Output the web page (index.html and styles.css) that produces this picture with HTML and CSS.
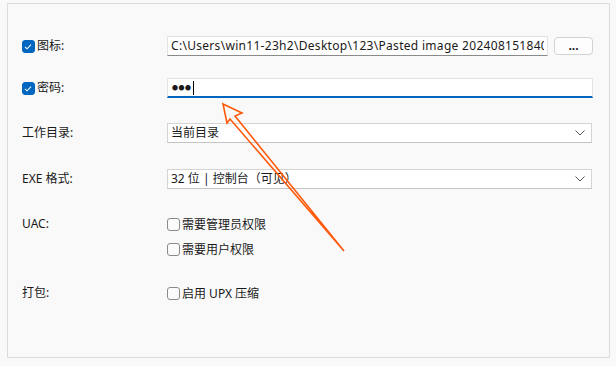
FILE: index.html
```html
<!DOCTYPE html>
<html lang="zh-CN">
<head>
    <meta charset="UTF-8">
    <meta name="viewport" content="width=device-width, initial-scale=1.0">
    <title>打包设置</title>
    <link rel="stylesheet" href="styles.css">
</head>
<body>
    <div class="panel">
        <div class="row row-icon">
            <label class="label">
                <span class="check checked">
                    <svg viewBox="0 0 13 13" width="13" height="13"><path d="M3.2 6.8 L5.4 9 L9.8 4.4" fill="none" stroke="#fff" stroke-width="1.1"/></svg>
                </span>图标:
            </label>
            <div class="control path-line">
                <div class="textbox path-box"><span class="path-text">C:\Users\win11-23h2\Desktop\123\Pasted image 2024081518405</span></div>
                <button class="btn-browse">...</button>
            </div>
        </div>

        <div class="row row-pass">
            <label class="label">
                <span class="check checked">
                    <svg viewBox="0 0 13 13" width="13" height="13"><path d="M3.2 6.8 L5.4 9 L9.8 4.4" fill="none" stroke="#fff" stroke-width="1.1"/></svg>
                </span>密码:
            </label>
            <div class="control">
                <div class="textbox pass-box focused"><span class="dots">●●●</span><span class="caret"></span></div>
            </div>
        </div>

        <div class="row row-dir">
            <span class="label">工作目录:</span>
            <div class="control">
                <div class="combo">当前目录
                    <svg class="chev" viewBox="0 0 10 6" width="10" height="6"><path d="M0.5 0.5 L5 5 L9.5 0.5" fill="none" stroke="#555" stroke-width="1"/></svg>
                </div>
            </div>
        </div>

        <div class="row row-exe">
            <span class="label">EXE 格式:</span>
            <div class="control">
                <div class="combo">32 位 | 控制台（可见）
                    <svg class="chev" viewBox="0 0 10 6" width="10" height="6"><path d="M0.5 0.5 L5 5 L9.5 0.5" fill="none" stroke="#555" stroke-width="1"/></svg>
                </div>
            </div>
        </div>

        <div class="row row-uac">
            <span class="label">UAC:</span>
            <div class="control options">
                <label class="option"><span class="check"></span>需要管理员权限</label>
                <label class="option"><span class="check"></span>需要用户权限</label>
            </div>
        </div>

        <div class="row row-pack">
            <span class="label">打包:</span>
            <div class="control options">
                <label class="option"><span class="check"></span>启用 UPX 压缩</label>
            </div>
        </div>

        <!-- 标注箭头 -->
        <svg class="arrow" viewBox="0 0 616 366" width="616" height="366">
            <polygon points="223,104 242,113 235,116 344,251 230,119 227,123" fill="none" stroke="#ff5a0a" stroke-width="1.6" stroke-linejoin="miter"/>
        </svg>
    </div>
</body>
</html>
```

FILE: styles.css
```css
* {
    margin: 0;
    padding: 0;
    box-sizing: border-box;
}

body {
    background-color: #f9f9f9;
    color: #1a1a1a;
    font-family: "Noto Sans", "Noto Sans CJK SC", sans-serif;
    font-size: 12px;
    width: 616px;
    height: 366px;
    overflow: hidden;
}

.panel {
    margin: 3px 0 0 7px;
    width: 603px;
    height: 355px;
    border: 1px solid #dcdcdc;
    background-color: #f9f9f9;
    padding: 32px 16px 0 14px;
}

.row {
    display: flex;
    align-items: center;
}

.row-icon { height: 20px; margin-bottom: 22px; }
.row-pass { height: 20px; margin-bottom: 25px; }
.row-dir { height: 20px; margin-bottom: 26px; }
.row-exe { height: 20px; margin-bottom: 25px; }
.row-uac { align-items: flex-start; margin-bottom: 24px; }

.label {
    width: 145px;
    flex-shrink: 0;
    display: flex;
    align-items: center;
    line-height: 20px;
    white-space: nowrap;
}

.control {
    flex: 1;
    min-width: 0;
}

.check {
    width: 13px;
    height: 13px;
    border: 1px solid #8b8b8b;
    border-radius: 3px;
    background-color: #fbfbfb;
    display: inline-flex;
    margin-right: 2px;
    flex-shrink: 0;
}

.check.checked {
    background-color: #0067c0;
    border-color: #0067c0;
}

.check.checked svg {
    margin: -1px 0 0 -1px;
}

.path-line {
    display: flex;
    align-items: center;
    gap: 6px;
}

.textbox {
    height: 20px;
    background-color: #fff;
    border: 1px solid #e3e3e3;
    line-height: 18px;
    padding: 0 3px;
    white-space: nowrap;
    overflow: hidden;
}

.path-box {
    width: 381px;
    border-bottom-color: #8a8a8a;
    letter-spacing: 0.3px;
}

.path-text {
    display: block;
    overflow: hidden;
}

.btn-browse {
    width: 39px;
    height: 18px;
    border: 1px solid #d2d2d2;
    border-radius: 4px;
    background-color: #fdfdfd;
    font-family: inherit;
    font-size: 12px;
    font-weight: bold;
    line-height: 14px;
    color: #1a1a1a;
}

.pass-box {
    width: 426px;
    border-bottom: 2px solid #0067c0;
    display: flex;
    align-items: center;
    padding-left: 4px;
}

.dots {
    font-size: 6px;
    letter-spacing: 0.5px;
}

.caret {
    display: inline-block;
    width: 1px;
    height: 14px;
    background-color: #000;
    margin-left: 1px;
}

.combo {
    width: 425px;
    height: 20px;
    background-color: #fff;
    border: 1px solid #d4d4d4;
    border-bottom-color: #c4c4c4;
    display: flex;
    align-items: center;
    justify-content: space-between;
    padding: 0 4px 0 3px;
    line-height: 18px;
}

.chev {
    margin-right: 2px;
}

.options {
    display: flex;
    flex-direction: column;
    gap: 5px;
}

.option {
    display: flex;
    align-items: center;
    height: 20px;
}

.arrow {
    position: absolute;
    left: 0;
    top: 0;
    pointer-events: none;
}
```
